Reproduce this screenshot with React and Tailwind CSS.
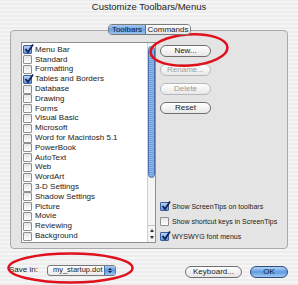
import React from 'react';

const toolbars = [
    { name: 'Menu Bar', checked: true },
    { name: 'Standard' },
    { name: 'Formatting' },
    { name: 'Tables and Borders', checked: true },
    { name: 'Database' },
    { name: 'Drawing' },
    { name: 'Forms' },
    { name: 'Visual Basic' },
    { name: 'Microsoft' },
    { name: 'Word for Macintosh 5.1' },
    { name: 'PowerBook' },
    { name: 'AutoText' },
    { name: 'Web' },
    { name: 'WordArt' },
    { name: '3-D Settings' },
    { name: 'Shadow Settings' },
    { name: 'Picture' },
    { name: 'Movie' },
    { name: 'Reviewing' },
    { name: 'Background' },
];

function CheckBox({ checked }) {
    if (checked) {
        return (
            <span className="relative w-[9px] h-[9px] shrink-0 rounded-[1px] border border-[#3a5f9a] bg-gradient-to-b from-[#b9d3f3] to-[#5f93d8]">
                <svg viewBox="0 0 10 10" className="absolute left-[0px] top-[-2px] w-[10px] h-[10px]">
                    <path d="M1.5 5 L4 8 L9 0.5" fill="none" stroke="#10245a" strokeWidth="1.8" />
                </svg>
            </span>
        );
    }
    return (
        <span className="w-[9px] h-[9px] shrink-0 rounded-[1px] border border-[#8e8e8e] bg-gradient-to-b from-[#e4e4e4] to-white" />
    );
}

function PillButton({ children, disabled }) {
    return (
        <div
            className={`w-[51px] h-[12px] rounded-full border flex items-center justify-center text-[8px] leading-none bg-gradient-to-b from-white to-[#e8e8e8] ${
                disabled ? 'border-[#b8b8b8] text-[#9a9a9a]' : 'border-[#6f6f6f] text-[#1a1a1a]'
            }`}
        >
            {children}
        </div>
    );
}

export default function App() {
    return (
        <div
            className="relative w-[298px] h-[285px] overflow-hidden flex flex-col bg-[repeating-linear-gradient(0deg,#ededed_0px,#ededed_2px,#f5f5f5_2px,#f5f5f5_4px)] text-[#1a1a1a]"
            style={{ fontFamily: '"Liberation Sans", Arial, sans-serif' }}
        >
            {/* Title bar */}
            <div className="h-[13px] flex items-center justify-center text-[9.5px] text-[#222] leading-none pt-[1px]">
                Customize Toolbars/Menus
            </div>

            {/* Tabs */}
            <div className="relative z-10 mt-[11px] flex justify-center pl-[1px]">
                <div className="flex h-[11px] rounded-[4px] border border-[#7a7a7a] overflow-hidden text-[8px] leading-none">
                    <div className="w-[37px] flex items-center justify-center bg-gradient-to-b from-[#a7caf2] via-[#6aa2e4] to-[#9ac3f0] text-[#0c1c3c] border-r border-[#5a6f90]">
                        Toolbars
                    </div>
                    <div className="w-[44px] flex items-center justify-center bg-gradient-to-b from-white to-[#e6e6e6]">
                        Commands
                    </div>
                </div>
            </div>

            {/* Group box */}
            <div className="mx-[10px] mt-[-5px] h-[219px] rounded-[4px] border border-[#a9a9a9] bg-[#e4e4e4] flex pl-[10px] pt-[11px]">
                {/* List */}
                <div className="w-[135px] h-[201px] border border-[#8f8f8f] bg-white flex">
                    <div className="flex-1 flex flex-col pt-[2px] pl-[1px]">
                        {toolbars.map((t) => (
                            <div key={t.name} className="h-[9.8px] flex items-center gap-[3px] text-[8px] leading-none">
                                <CheckBox checked={t.checked} />
                                <span className="whitespace-nowrap">{t.name}</span>
                            </div>
                        ))}
                    </div>
                    {/* Scrollbar */}
                    <div className="w-[8px] flex flex-col border-l border-[#d0d0d0] bg-[#f4f4f4]">
                        <div className="mt-[3px] h-[132px] rounded-full border border-[#4a6fa8] bg-[repeating-linear-gradient(0deg,#6e9fe0_0px,#6e9fe0_1px,#8cb6ec_1px,#8cb6ec_2px)]" />
                        <div className="flex-1" />
                        <div className="h-[16px] flex flex-col items-center justify-center gap-[4px] border-t border-[#c8c8c8] mb-[1px]">
                            <div className="w-0 h-0 border-l-[2px] border-r-[2px] border-b-[3px] border-l-transparent border-r-transparent border-b-[#333]" />
                            <div className="w-0 h-0 border-l-[2px] border-r-[2px] border-t-[3px] border-l-transparent border-r-transparent border-t-[#333]" />
                        </div>
                    </div>
                </div>

                {/* Right column */}
                <div className="flex-1 flex flex-col pl-[4px]">
                    <div className="flex flex-col gap-[7px] pt-[3px]">
                        <PillButton>New...</PillButton>
                        <PillButton disabled>Rename...</PillButton>
                        <PillButton disabled>Delete</PillButton>
                        <PillButton>Reset</PillButton>
                    </div>
                    <div className="flex-1" />
                    <div className="flex flex-col gap-[6px] pb-[7px] text-[7px] leading-none">
                        <div className="flex items-center gap-[3px] h-[9px]">
                            <CheckBox checked />
                            <span className="whitespace-nowrap">Show ScreenTips on toolbars</span>
                        </div>
                        <div className="flex items-center gap-[3px] h-[9px]">
                            <CheckBox />
                            <span className="whitespace-nowrap">Show shortcut keys in ScreenTips</span>
                        </div>
                        <div className="flex items-center gap-[3px] h-[9px]">
                            <CheckBox checked />
                            <span className="whitespace-nowrap">WYSWYG font menus</span>
                        </div>
                    </div>
                </div>
            </div>

            {/* Bottom bar */}
            <div className="flex items-center mt-[14px] pl-[9px] pr-[10px] h-[14px]">
                <span className="text-[8px] leading-none">Save in:</span>
                <div className="ml-[9px] w-[69px] h-[11px] rounded-[3px] border border-[#7a7a7a] bg-gradient-to-b from-white to-[#ebebeb] flex items-center text-[7.5px] leading-none overflow-hidden">
                    <span className="flex-1 pl-[5px] whitespace-nowrap">my_startup.dot</span>
                    <div className="w-[11px] h-full bg-gradient-to-b from-[#a7caf2] via-[#5e98e0] to-[#9ac3f0] border-l border-[#4a6fa8] flex flex-col items-center justify-center gap-[1px]">
                        <div className="w-0 h-0 border-l-[2px] border-r-[2px] border-b-[2px] border-l-transparent border-r-transparent border-b-[#0c1c3c]" />
                        <div className="w-0 h-0 border-l-[2px] border-r-[2px] border-t-[2px] border-l-transparent border-r-transparent border-t-[#0c1c3c]" />
                    </div>
                </div>
                <div className="flex-1" />
                <div className="mt-[4px] w-[57px] h-[12px] rounded-full border border-[#6f6f6f] bg-gradient-to-b from-white to-[#e6e6e6] flex items-center justify-center text-[8px] leading-none">
                    Keyboard...
                </div>
                <div className="mt-[4px] ml-[8px] w-[38px] h-[12px] rounded-full border border-[#2c4a7e] bg-gradient-to-b from-[#b4d4f6] via-[#5e9ae2] to-[#a2c9f2] flex items-center justify-center text-[8px] leading-none text-[#0c1c3c]">
                    OK
                </div>
            </div>

            {/* Red annotation ellipses */}
            <svg className="absolute left-0 top-0 w-[298px] h-[285px] pointer-events-none" viewBox="0 0 298 285">
                <ellipse cx="189" cy="50" rx="38.5" ry="15.5" fill="none" stroke="#e0101c" strokeWidth="2.5" transform="rotate(-4 189 50)" />
                <ellipse cx="70.5" cy="268" rx="62" ry="14.5" fill="none" stroke="#e0101c" strokeWidth="2.5" />
            </svg>
        </div>
    );
}
